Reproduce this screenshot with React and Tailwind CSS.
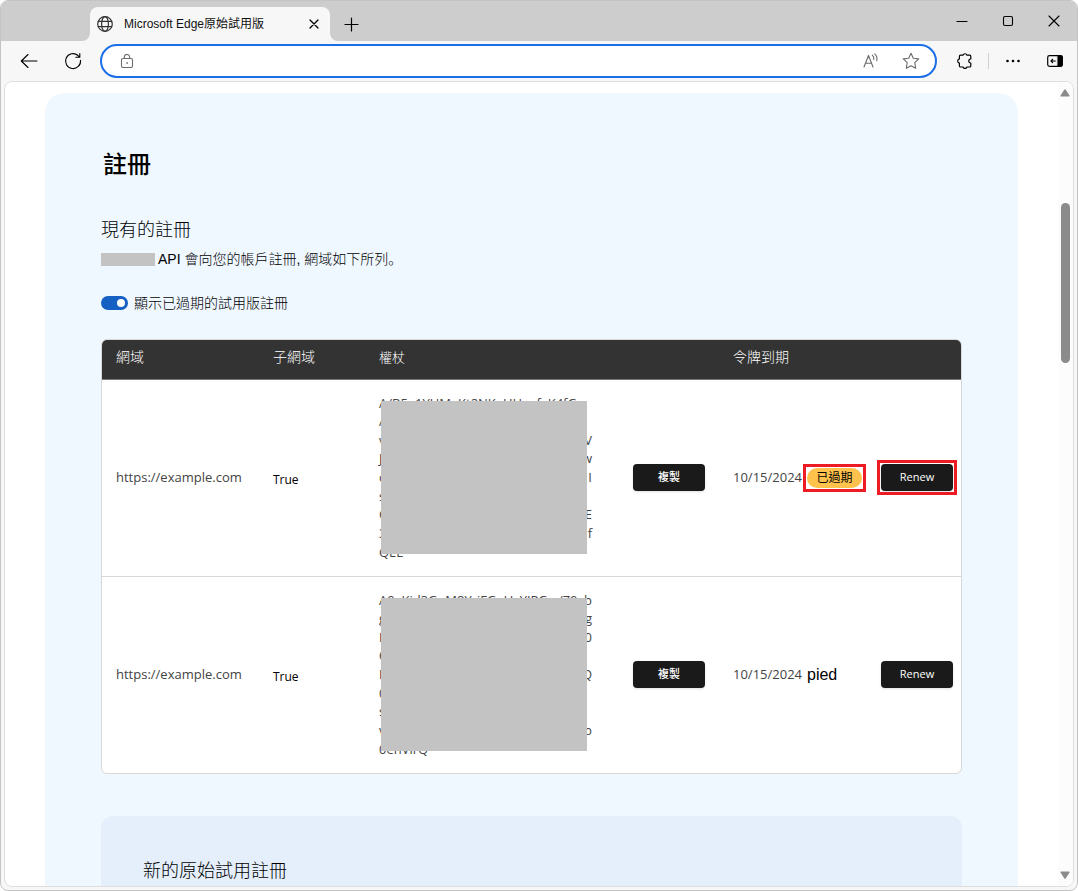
import React from "react";

const registrations = [
  {
    domain: "https://example.com",
    subdomain: "True",
    date: "10/15/2024",
    expired: true,
    token: [
      ["A/B5e1YUMgKt2NKeUHvofxK4fG", ""],
      ["A", ""],
      ["v", "V"],
      ["J", "w"],
      ["c", "I"],
      ["s", ""],
      ["C", "E"],
      ["3", "f"],
      ["QEE", ""],
    ],
  },
  {
    domain: "https://example.com",
    subdomain: "True",
    date: "10/15/2024",
    expired: false,
    token: [
      ["A9xKjd3GoM8YriFGeUvYJPGw/Z9", "b"],
      ["g", "g"],
      ["F", "0"],
      ["6", ""],
      ["E", "Q"],
      ["0", ""],
      ["s", ""],
      ["v", "b"],
      ["0enVlrQ", ""],
    ],
  },
];

const Icon = ({ size = 20, children, className = "" }) => (
  <svg
    width={size}
    height={size}
    viewBox={`0 0 ${size} ${size}`}
    fill="none"
    stroke="currentColor"
    strokeLinecap="round"
    strokeLinejoin="round"
    className={`shrink-0 ${className}`}
    aria-hidden="true"
  >
    {children}
  </svg>
);

const IconButton = ({ label, className = "", children }) => (
  <button
    type="button"
    aria-label={label}
    className={`flex items-center justify-center shrink-0 ${className}`}
  >
    {children}
  </button>
);

const TitleBar = () => (
  <div className="flex h-10 shrink-0 bg-[#cdcdcd]">
    <div className="w-[89px] bg-[#f7f7f7]">
      <div className="h-full bg-[#cdcdcd] rounded-br-lg" />
    </div>
    <div className="mt-1.5 flex w-60 items-center rounded-t-lg bg-[#f7f7f7] pl-[7px] pr-2">
      <Icon size={16} className="text-[#333]">
        <circle cx="8" cy="8" r="7.3" strokeWidth="1.2" />
        <ellipse cx="8" cy="8" rx="3.4" ry="7.3" strokeWidth="1.2" />
        <path d="M1.3 5.4h13.4M1.3 10.6h13.4" strokeWidth="1.2" />
      </Icon>
      <span className="ml-[11px] flex-1 truncate font-['Liberation_Sans','Noto_Sans_CJK_TC',sans-serif] text-xs text-[#111]">
        Microsoft Edge原始試用版
      </span>
      <IconButton label="關閉分頁" className="size-4">
        <Icon size={10}>
          <path d="M1 1l8 8M9 1l-8 8" strokeWidth="1.3" />
        </Icon>
      </IconButton>
    </div>
    <div className="flex flex-1 bg-[#f7f7f7]">
      <div className="flex flex-1 items-center justify-between rounded-bl-lg bg-[#cdcdcd]">
        <IconButton label="新增分頁" className="ml-3.5 mt-1.5">
          <Icon size={15}>
            <path d="M7.5 1v13M1 7.5h13" strokeWidth="1.2" />
          </Icon>
        </IconButton>
        <div className="flex">
          <IconButton label="最小化" className="w-[46px]">
            <Icon size={12}>
              <path d="M1 6.5h10" strokeWidth="1.2" />
            </Icon>
          </IconButton>
          <IconButton label="最大化" className="w-[46px]">
            <Icon size={12}>
              <rect x="1.5" y="1.5" width="9" height="9" rx="1.5" strokeWidth="1.1" />
            </Icon>
          </IconButton>
          <IconButton label="關閉" className="w-[46px]">
            <Icon size={12}>
              <path d="M1 1l10 10M11 1L1 11" strokeWidth="1.1" />
            </Icon>
          </IconButton>
        </div>
      </div>
    </div>
  </div>
);

const Toolbar = () => (
  <div className="flex h-10 shrink-0 items-center bg-[#f7f7f7]">
    <IconButton label="上一頁" className="ml-4 w-6">
      <Icon size={18}>
        <path d="M17 9H1.5M8 2.5L1.3 9 8 15.5" strokeWidth="1.1" />
      </Icon>
    </IconButton>
    <IconButton label="重新整理" className="ml-5 w-6">
      <Icon size={18}>
        <path d="M16.5 8.2A7.5 7.5 0 1 1 13.8 3.3L15.500 5M15.8 1.5v3.800h-4" strokeWidth="1.1" />
      </Icon>
    </IconButton>
    <div className="ml-[15px] flex h-[34px] flex-1 items-center rounded-full border-2 border-[#1a6fe6] bg-white pl-[18px] pr-3.5 text-[#6b6b6b]">
      <Icon size={14}>
        <rect x="1.5" y="4.5" width="11" height="9" rx="1.5" strokeWidth="1.1" />
        <path d="M4.3 4.300V3.200a2.700 2.700 0 0 1 5.400 0v1.100" strokeWidth="1.1" />
        <circle cx="7" cy="9" r="0.5" fill="currentColor" strokeWidth="0.6" />
      </Icon>
      <input
        type="text"
        aria-label="網址列"
        className="mx-3 min-w-0 flex-1 bg-transparent text-sm outline-none"
      />
      <IconButton label="大聲朗讀" className="w-5">
        <Icon size={18}>
          <path d="M2 15L6.5 3.5 11 15M3.600 11.200h5.800" strokeWidth="1.1" />
          <path d="M10.3 3.200a4.500 4.500 0 0 1 1.500 4.300M12.800 1.800a7 7 0 0 1 1.900 6.900" strokeWidth="1.1" />
        </Icon>
      </IconButton>
      <IconButton label="加到我的最愛" className="ml-5 w-5">
        <Icon size={18}>
          <path
            d="M9 1.3l2.3 4.9 5.4.7-3.9 3.8.9 5.6L9 13.7l-4.7 2.6.9-5.6L1.3 6.900l5.400-.7z"
            strokeWidth="1.1"
          />
        </Icon>
      </IconButton>
    </div>
    <IconButton label="擴充功能" className="ml-[18px] w-5">
      <Icon size={18}>
        <path
          d="M4.600 3.200H7a2.100 2.100 0 0 1 4 0h2.600a1.200 1.200 0 0 1 1.200 1.200V7c-2.700-.3-2.700 4.300 0 4v2.800a1.200 1.200 0 0 1-1.200 1.200H11a2.100 2.100 0 0 1-4 0H4.600a1.200 1.200 0 0 1-1.200-1.200V11.200a2.200 2.200 0 0 1 0-4.300V4.400A1.200 1.200 0 0 1 4.600 3.200z"
          strokeWidth="1.2"
        />
      </Icon>
    </IconButton>
    <div className="ml-[13px] h-4 w-px bg-[#cfcfcf]" />
    <IconButton label="設定及其他" className="ml-3.5 w-5">
      <Icon size={16}>
        <g fill="currentColor" stroke="none">
          <circle cx="2.5" cy="8" r="1.3" />
          <circle cx="8" cy="8" r="1.3" />
          <circle cx="13.5" cy="8" r="1.3" />
        </g>
      </Icon>
    </IconButton>
    <IconButton label="側邊欄" className="ml-[22px] mr-3 w-5">
      <Icon size={16}>
        <rect x="0.7" y="2.7" width="14.6" height="10.6" rx="1.8" strokeWidth="1.2" />
        <path d="M10.800 2.500h3A1.700 1.700 0 0 1 15.500 4.200v7.600a1.700 1.700 0 0 1-1.700 1.700h-3z" fill="currentColor" strokeWidth="0.5" />
        <path d="M8.300 8H4M5.600 6.400L4 8l1.600 1.600" strokeWidth="1.2" />
      </Icon>
    </IconButton>
  </div>
);

const ScrollBar = () => (
  <div className="flex w-[15px] shrink-0 flex-col items-center bg-[#fcfcfc] py-[7px] pr-px text-[#8b8b8b]">
    <svg width="10" height="8" viewBox="0 0 10 8" fill="currentColor" aria-hidden="true">
      <path d="M4.200.8a1 1 0 0 1 1.600 0l3.700 5.600a.8.8 0 0 1-.7 1.200H1.200a.8.8 0 0 1-.7-1.200z" />
    </svg>
    <div className="mt-[106px] h-40 w-[9px] rounded-full bg-[#8b8b8b]" />
    <svg
      width="10"
      height="8"
      viewBox="0 0 10 8"
      fill="currentColor"
      className="mt-auto rotate-180"
      aria-hidden="true"
    >
      <path d="M4.200.8a1 1 0 0 1 1.600 0l3.700 5.600a.8.8 0 0 1-.7 1.200H1.200a.8.8 0 0 1-.7-1.200z" />
    </svg>
  </div>
);

const Highlight = ({ children }) => (
  <div className="w-fit outline-3 outline-offset-1 outline-[#ed1c24]">{children}</div>
);

const DarkButton = ({ children }) => (
  <button
    type="button"
    className="block h-[27px] w-[72px] rounded bg-[#1a1a1a] text-[11px] font-medium text-white shadow-sm"
  >
    {children}
  </button>
);

const TokenCell = ({ lines }) => (
  <div className="relative flex h-[167px] w-[213px] flex-col justify-between leading-[18px]">
    {lines.map(([start, end], index) => (
      <div key={index} className="flex justify-between whitespace-nowrap">
        <span>{start}</span>
        <span>{end}</span>
      </div>
    ))}
    <div className="absolute left-0.5 right-[5px] top-[7px] bottom-[7px] bg-[#c3c3c3]" />
  </div>
);

const RegistrationTable = () => (
  <div className="mt-6 overflow-hidden rounded-md border border-[#d8d8d8] bg-white">
    <table className="w-full table-fixed text-left text-[13px] text-[#444]">
      <colgroup>
        <col className="w-[157px]" />
        <col className="w-[106px]" />
        <col className="w-[254px]" />
        <col className="w-[100px]" />
        <col />
        <col className="w-[94px]" />
      </colgroup>
      <thead className="bg-[#333] text-sm text-white">
        <tr className="h-[39px] border-b border-[#777]">
          <th className="px-3.5 pb-1 font-light">網域</th>
          <th className="px-3.5 pb-1 font-light">子網域</th>
          <th className="px-3.5 pb-1 text-[13px] font-light">權杖</th>
          <td />
          <th className="px-3.5 pb-1 font-light">令牌到期</th>
          <td />
        </tr>
      </thead>
      <tbody>
        {registrations.map((item, index) => (
          <tr key={index} className="border-b border-[#d8d8d8] last:border-b-0">
            <td className="px-3.5">{item.domain}</td>
            <td className="px-3.5 pt-1 text-xs text-black">{item.subdomain}</td>
            <td className="px-3.5 pb-[15px] pt-3.5">
              <TokenCell lines={item.token} />
            </td>
            <td className="px-3.5">
              <DarkButton>複製</DarkButton>
            </td>
            <td className="pl-3.5">
              <div className="flex items-center gap-[5px] whitespace-nowrap">
                {item.date}
                {item.expired ? (
                  <Highlight>
                    <span className="flex h-5 w-[55px] items-center justify-center rounded-full bg-[#ffc34d] text-xs text-black">
                      已過期
                    </span>
                  </Highlight>
                ) : (
                  <span className="font-['Liberation_Sans',sans-serif] text-base text-black">
                    pied
                  </span>
                )}
              </div>
            </td>
            <td className="pl-3.5">
              {item.expired ? (
                <Highlight>
                  <DarkButton>Renew</DarkButton>
                </Highlight>
              ) : (
                <DarkButton>Renew</DarkButton>
              )}
            </td>
          </tr>
        ))}
      </tbody>
    </table>
  </div>
);

const App = () => {
  return (
    <div className="h-screen bg-white font-['Open_Sans','Noto_Sans_CJK_TC',sans-serif] text-black">
      <div className="flex h-full flex-col overflow-hidden rounded-lg border border-[#c4c4c4] bg-[#f7f7f7]">
        <TitleBar />
        <Toolbar />
        <div className="mx-[3px] mb-[3px] flex min-h-0 flex-1 overflow-hidden rounded-lg border border-[#dedede] bg-white">
          <main className="flex-1 overflow-hidden px-10 pt-[11px]">
            <div className="rounded-t-[20px] bg-[#eff7ff] px-14 pt-[53px]">
              <h1 className="pl-0.5 text-2xl font-medium leading-9">註冊</h1>
              <h2 className="mt-[33px] text-lg font-light leading-7">現有的註冊</h2>
              <p className="mt-1 flex items-center gap-[3px] text-sm font-light leading-6">
                <span className="h-[13px] w-[54px] bg-[#c3c3c3]" />
                <span className="font-['Liberation_Sans','Noto_Sans_CJK_SC',sans-serif]">
                  API 會向您的帳戶註冊, 網域如下所列。
                </span>
              </p>
              <label className="mt-5 flex w-fit items-center gap-1.5 text-sm font-light leading-6">
                <input
                  type="checkbox"
                  role="switch"
                  defaultChecked
                  className="flex h-3.5 w-[27px] appearance-none items-center rounded-full bg-[#9a9a9a] px-[3px] before:size-2 before:rounded-full before:bg-white checked:justify-end checked:bg-[#1560c2]"
                />
                顯示已過期的試用版註冊
              </label>
              <RegistrationTable />
              <section className="mt-[42px] rounded-t-xl bg-[#e5effb] px-[42px] pb-20 pt-10">
                <h2 className="text-lg font-light leading-7">新的原始試用註冊</h2>
              </section>
            </div>
          </main>
          <ScrollBar />
        </div>
      </div>
    </div>
  );
};

export default App;
